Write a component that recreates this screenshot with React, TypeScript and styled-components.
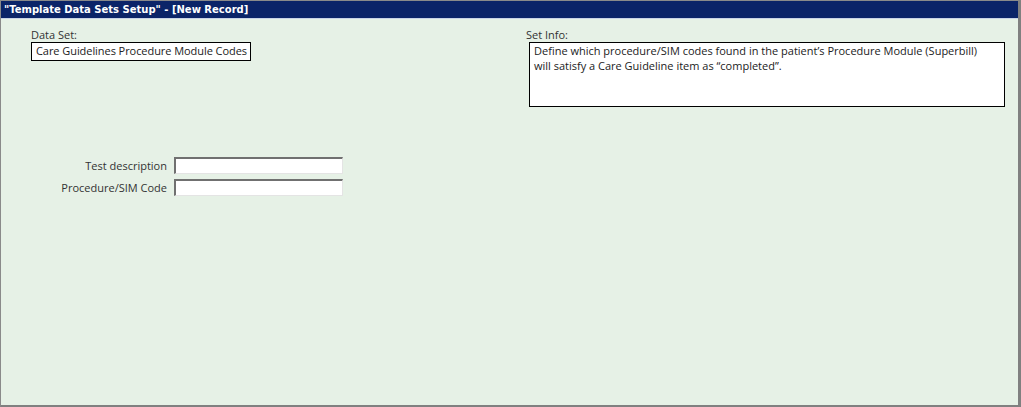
import React from "react";
import styled, { createGlobalStyle } from "styled-components";

const GlobalStyle = createGlobalStyle`
  html, body {
    margin: 0;
    padding: 0;
    background: #ffffff;
  }
  * {
    box-sizing: border-box;
  }
`;

const Window = styled.div`
  width: 1021px;
  height: 407px;
  display: flex;
  flex-direction: column;
  background-color: #e6f1e6;
  border-top: 1px solid #8a8a8a;
  border-left: 1px solid #8a8a8a;
  border-right: 3px solid #808080;
  border-bottom: 2px solid #808080;
  font-family: "Open Sans", "Liberation Sans", sans-serif;
  color: #222;
  overflow: hidden;
`;

const TitleBar = styled.div`
  height: 18px;
  background-color: #0b2468;
  border-bottom: 1px solid #c9d3e6;
  color: #fff;
  font-family: "DejaVu Sans", "Liberation Sans", sans-serif;
  font-weight: bold;
  font-size: 10px;
  line-height: 17px;
  padding-left: 3px;
  white-space: nowrap;
`;

const Body = styled.div`
  flex: 1;
  display: flex;
  flex-direction: column;
  padding: 8px 8px 0 30px;
`;

const TopRow = styled.div`
  display: flex;
`;

const Field = styled.div<{ $width: number; $indent?: number }>`
  display: flex;
  flex-direction: column;
  width: ${(p) => p.$width}px;
  flex-shrink: 0;

  & > :last-child {
    margin-left: ${(p) => p.$indent ?? 0}px;
  }
`;

const Label = styled.span`
  font-size: 11px;
  line-height: 15px;
  color: #333;
  white-space: nowrap;
`;

const ValueBox = styled.div<{ $height: number; $tight?: boolean }>`
  height: ${(p) => p.$height}px;
  border: 1px solid #000;
  background: #fff;
  font-size: 11px;
  line-height: 15px;
  padding: ${(p) => (p.$tight ? "0 0 0 4px" : "0 4px")};
  white-space: ${(p) => (p.$tight ? "nowrap" : "pre-wrap")};
  letter-spacing: ${(p) => (p.$tight ? "-0.06px" : "0")};
  overflow: hidden;
`;

const Spacer = styled.div<{ $width: number }>`
  width: ${(p) => p.$width}px;
  flex-shrink: 0;
`;

const FormGrid = styled.div`
  display: grid;
  grid-template-columns: 136px 169px;
  column-gap: 7px;
  row-gap: 5px;
  align-items: center;
  margin-top: 50px;
`;

const FormLabel = styled.label`
  font-size: 11px;
  text-align: right;
  color: #333;
  white-space: nowrap;
`;

const TextInput = styled.input`
  height: 17px;
  width: 169px;
  margin: 0;
  padding: 0 2px;
  background: #fff;
  border-top: 2px solid #707070;
  border-left: 2px solid #707070;
  border-right: 1px solid #e4e4e4;
  border-bottom: 1px solid #e4e4e4;
  font-family: inherit;
  font-size: 11px;
  outline: none;
`;

const App: React.FC = () => {
  return (
    <>
      <GlobalStyle />
      <Window>
        <TitleBar>"Template Data Sets Setup" - [New Record]</TitleBar>
        <Body>
          <TopRow>
            <Field $width={220}>
              <Label>Data Set:</Label>
              <ValueBox $height={19} $tight>
                Care Guidelines Procedure Module Codes
              </ValueBox>
            </Field>
            <Spacer $width={275} />
            <Field $width={479} $indent={3}>
              <Label>Set Info:</Label>
              <ValueBox $height={65}>
                Define which procedure/SIM codes found in the patient’s Procedure Module (Superbill){"\n"}will satisfy a Care Guideline item as “completed”.
              </ValueBox>
            </Field>
          </TopRow>
          <FormGrid>
            <FormLabel htmlFor="test-description">Test description</FormLabel>
            <TextInput id="test-description" type="text" />
            <FormLabel htmlFor="procedure-sim-code">Procedure/SIM Code</FormLabel>
            <TextInput id="procedure-sim-code" type="text" />
          </FormGrid>
        </Body>
      </Window>
    </>
  );
};

export default App;
